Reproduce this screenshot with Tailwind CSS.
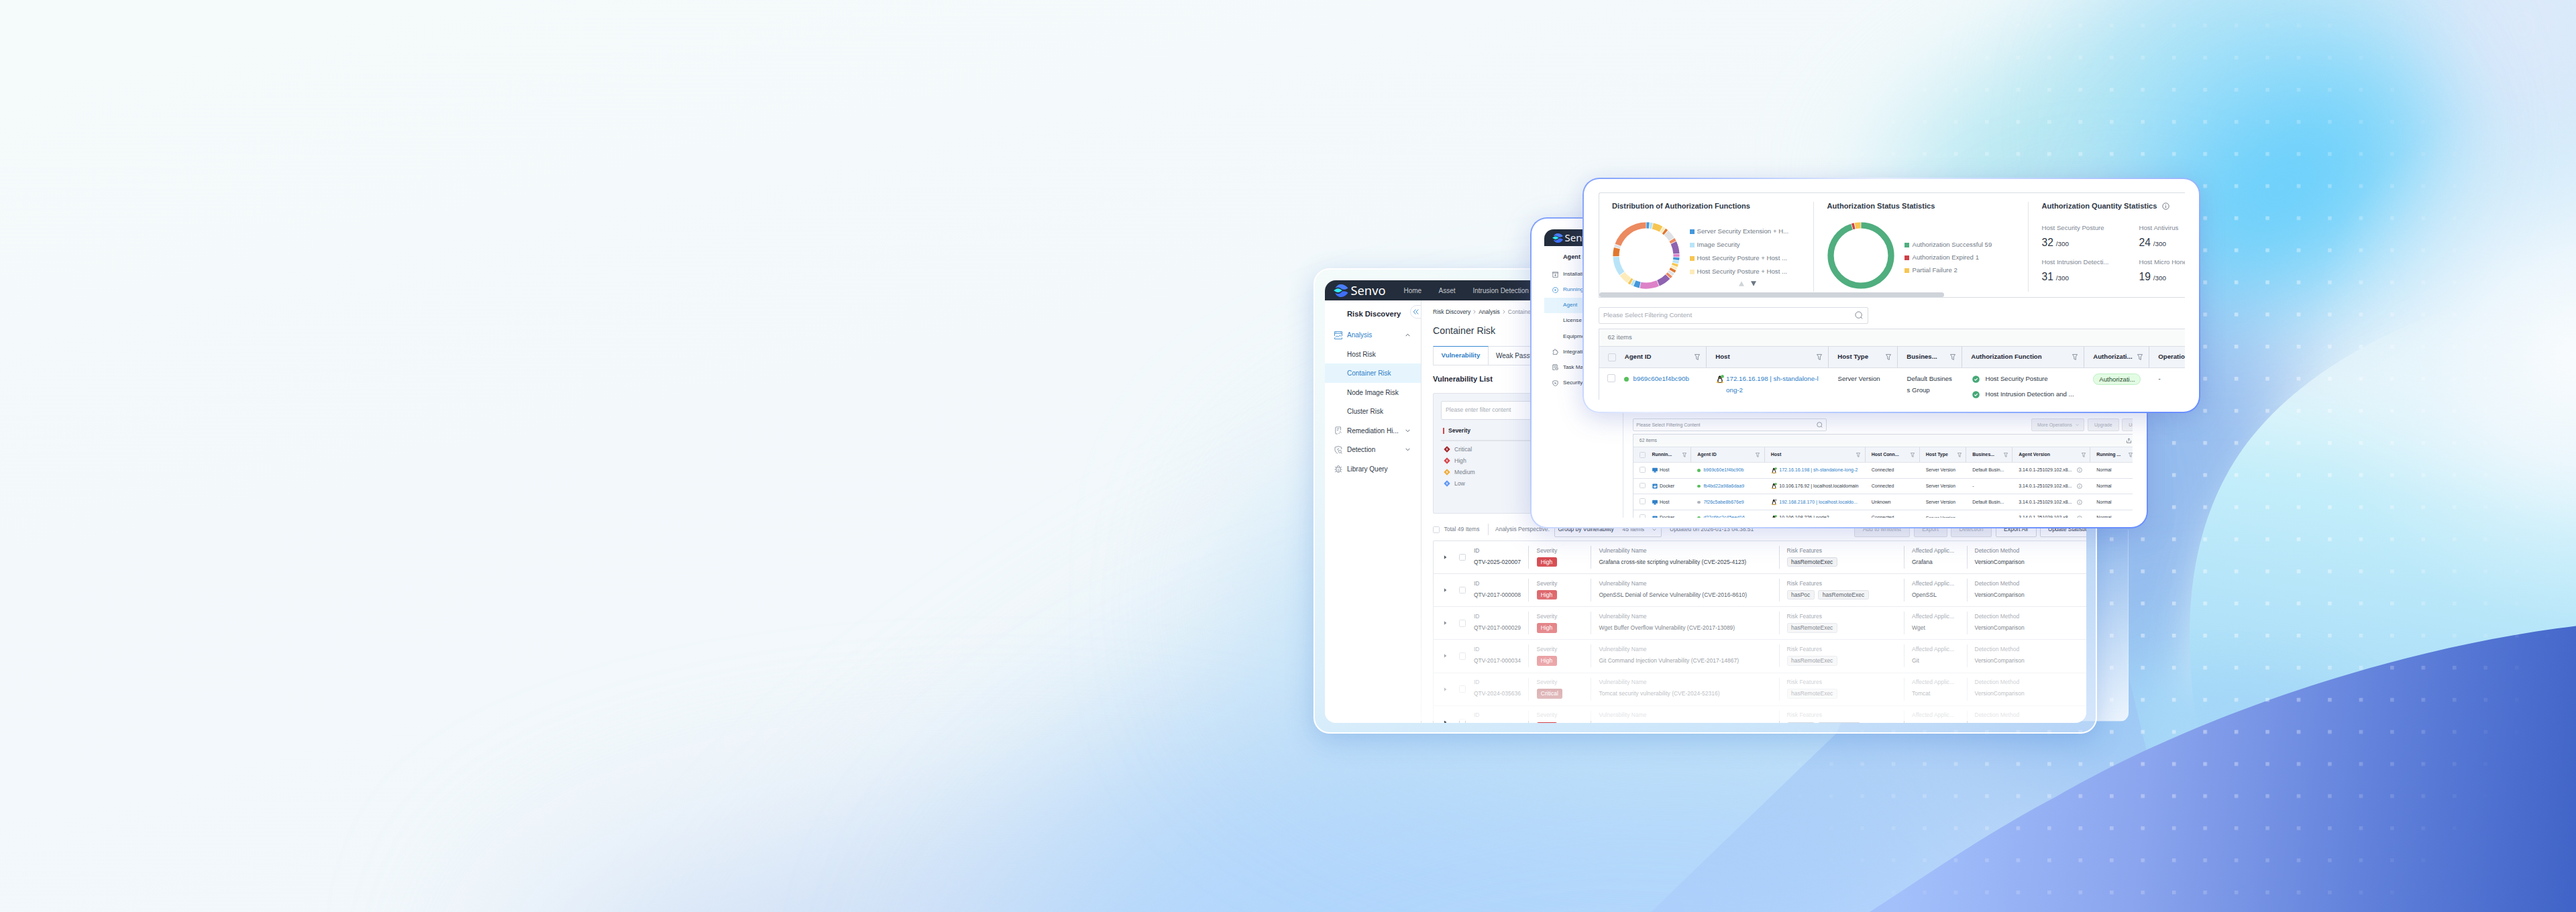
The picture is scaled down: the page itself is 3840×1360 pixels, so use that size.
<!DOCTYPE html>
<html lang="en">
<head>
    <meta charset="UTF-8">
    <meta name="viewport" content="width=device-width, initial-scale=1.0">
    <title>Senvo</title>
    <!-- Tailwind CSS CDN -->
    <script src="https://cdn.jsdelivr.net/npm/@tailwindcss/browser@4"></script>
</head>
<body class="h-[1360px] overflow-hidden bg-[#f5fbfb] font-['Liberation_Sans',Arial,sans-serif] text-[#2f3947]">
    <div class="relative w-[3840px] h-[1360px] overflow-hidden whitespace-nowrap">

        <!-- Background -->
        <svg class="absolute inset-0" width="3840" height="1360" viewBox="0 0 3840 1360" color-interpolation-filters="sRGB">
            <defs>
                <filter id="b40" x="-50%" y="-50%" width="200%" height="200%"><feGaussianBlur stdDeviation="36"/></filter>
                <filter id="b80" x="-80%" y="-80%" width="260%" height="260%"><feGaussianBlur stdDeviation="85"/></filter>
                <filter id="b130" x="-80%" y="-80%" width="260%" height="260%"><feGaussianBlur stdDeviation="140"/></filter>
                <linearGradient id="base" gradientUnits="userSpaceOnUse" x1="600" y1="0" x2="900" y2="1360">
                    <stop offset="0" stop-color="#f5fbfb"/>
                    <stop offset="1" stop-color="#f1f7fb"/>
                </linearGradient>
                <linearGradient id="wave" gradientUnits="userSpaceOnUse" x1="2850" y1="1150" x2="3840" y2="1270">
                    <stop offset="0" stop-color="#a3c0fb"/>
                    <stop offset=".35" stop-color="#8ba5ee"/>
                    <stop offset=".7" stop-color="#6080da"/>
                    <stop offset="1" stop-color="#4164c8"/>
                </linearGradient>
                <linearGradient id="wedge" gradientUnits="userSpaceOnUse" x1="0" y1="850" x2="0" y2="1360">
                    <stop offset="0" stop-color="#93bcee"/>
                    <stop offset="1" stop-color="#a9cbfb"/>
                </linearGradient>
                <linearGradient id="ice" gradientUnits="userSpaceOnUse" x1="3560" y1="400" x2="3440" y2="1060">
                    <stop offset="0" stop-color="#f7fbfd"/>
                    <stop offset=".25" stop-color="#e9f7fb"/>
                    <stop offset=".5" stop-color="#c4eefa"/>
                    <stop offset="1" stop-color="#a8dcf8"/>
                </linearGradient>
                <radialGradient id="iceRight" gradientUnits="userSpaceOnUse" cx="3840" cy="530" r="400">
                    <stop offset="0" stop-color="#fafcfe" stop-opacity=".95"/>
                    <stop offset=".4" stop-color="#f1f8fd" stop-opacity=".7"/>
                    <stop offset="1" stop-color="#d8effb" stop-opacity="0"/>
                </radialGradient>
                <linearGradient id="iceFade" gradientUnits="userSpaceOnUse" x1="3640" y1="440" x2="3540" y2="680">
                    <stop offset="0" stop-color="#fff" stop-opacity="0"/>
                    <stop offset="1" stop-color="#fff"/>
                </linearGradient>
                <pattern id="dots" patternUnits="userSpaceOnUse" x="3330.8" y="131" width="46.46" height="47.88">
                    <rect width="5.6" height="5.6" fill="#fff" fill-opacity=".42"/>
                </pattern>
                <radialGradient id="dotFade" gradientUnits="userSpaceOnUse" cx="0" cy="0" r="1" gradientTransform="translate(3180 700) scale(660 860)">
                    <stop offset=".45" stop-color="#fff"/>
                    <stop offset="1" stop-color="#fff" stop-opacity="0"/>
                </radialGradient>
                <mask id="dotMask" maskUnits="userSpaceOnUse" x="0" y="0" width="3840" height="1360"><rect width="3840" height="1360" fill="url(#dotFade)"/></mask>
                <mask id="iceMask" maskUnits="userSpaceOnUse" x="3000" y="0" width="840" height="1360"><rect x="3000" width="840" height="1360" fill="url(#iceFade)"/></mask>
            </defs>
            <rect width="3840" height="1360" fill="url(#base)"/>
            <!-- lower haze -->
            <ellipse cx="2280" cy="1150" rx="1200" ry="360" transform="rotate(-24 2280 1150)" fill="#cbe5f8" filter="url(#b130)"/>
            <ellipse cx="1480" cy="1480" rx="700" ry="230" fill="#cfdff6" filter="url(#b130)"/>
            <ellipse cx="2230" cy="1410" rx="760" ry="380" transform="rotate(-12 2230 1410)" fill="#b1d6fc" filter="url(#b130)"/>
            <ellipse cx="2500" cy="900" rx="600" ry="260" fill="#bfe1f7" filter="url(#b130)"/>
            <!-- upper right sky -->
            <ellipse cx="3520" cy="170" rx="440" ry="340" fill="#cae8fa" filter="url(#b80)"/>
            <ellipse cx="3760" cy="40" rx="170" ry="200" fill="#dce9fa" filter="url(#b80)"/>
            <ellipse cx="3140" cy="200" rx="340" ry="150" transform="rotate(-18 3140 200)" fill="#b6e8f2" filter="url(#b80)"/>
            <ellipse cx="3390" cy="190" rx="230" ry="200" fill="#a2dff9" filter="url(#b80)"/>
            <ellipse cx="3160" cy="760" rx="290" ry="420" fill="#95bcee" filter="url(#b80)"/>
            <ellipse cx="3400" cy="280" rx="220" ry="130" transform="rotate(-35 3400 280)" fill="#68cffb" filter="url(#b80)"/>
            <ellipse cx="3330" cy="1080" rx="300" ry="120" fill="#a2d6f8" filter="url(#b80)"/>
            <!-- pale dome -->
            <path d="M3960 400C3700 450 3500 540 3400 660S3272 830 3268 1000L3250 1180L3960 1100Z" fill="#dff4fb" filter="url(#b40)" opacity=".85"/>
            <g mask="url(#iceMask)">
                <path d="M3900 400C3640 440 3450 530 3350 660C3290 740 3262 840 3264 960C3266 1020 3270 1060 3280 1100L3900 1000Z" fill="url(#ice)"/>
            </g>
            <rect x="3440" y="130" width="400" height="860" fill="url(#iceRight)"/>
            <ellipse cx="3330" cy="1080" rx="160" ry="70" fill="#a4d6f7" filter="url(#b40)"/>
            <!-- wedge and wave -->
            <path d="M2738 1093L2830 870L3140 870L3200 1120L2800 1360H2461Z" fill="url(#wedge)" opacity=".55"/>
            <path d="M3860 931C3560 965 3260 1075 3065 1188C2960 1243 2880 1300 2787 1360H3860Z" fill="url(#wave)"/>
            <rect x="2400" width="1440" height="1360" fill="url(#dots)" mask="url(#dotMask)"/>
        </svg>

        <!-- Back sheet, visible at the right of the first window -->
        <div class="absolute left-[2990px] top-[790px] w-[183px] h-[286px] rounded-br-[13px] border-b border-r border-white/30 bg-linear-to-b from-white/0 to-white/80"></div>

        <!-- Window 1: container risk -->
        <div class="absolute left-[1958px] top-[400px] w-[1168px] h-[694px] rounded-[24px] border-2 border-white bg-linear-to-br from-[#f4fbfa]/90 via-[#e2f3fc]/70 to-[#c4dcf9]/60 p-[14.5px] pt-4 shadow-[0_10px_40px_rgba(70,130,210,0.32)]">
            <div class="relative flex h-[660px] w-[1135.5px] flex-col overflow-hidden rounded-2xl bg-white">
                <div class="flex h-[30px] shrink-0 items-center bg-[#232d3b] pl-[13.5px] text-[10px] text-[#c6cad0]">
                    <svg class="h-[19px] w-[21.5px]" viewBox="0 0 66 58">
                        <path d="M8 17C14 6 22 0 33 0C46 0 57 6 66 17C60 22 54 24 46 24C35 24 31 14 21 14C16 14 12 15 8 17Z" fill="#4a7dfb"/>
                        <path d="M6 38C10 41 15 43 21 43C32 43 36 31 46 31C54 31 60 33 66 39C57 51 47 58 34 58C21 58 12 51 6 38Z" fill="#3f6ff8"/>
                        <path d="M0 28C7 25 12 19 20 19S33 25 40 28C33 31 28 37 20 37S7 31 0 28Z" fill="#30e8f4"/>
                    </svg>
                    <span class="ml-[4px] w-[79px] font-['Noto_Sans'] text-[18.3px] leading-none text-white">Senvo</span>
                    <span class="w-[52px]">Home</span>
                    <span class="w-[51px]">Asset</span>
                    <span>Intrusion Detection</span>
                </div>
                <div class="flex min-h-0 flex-1">
                    <!-- Sidebar -->
                    <div class="relative w-[144.5px] shrink-0 border-r border-[#e3e6ec] text-[10px]">
                        <div class="flex h-[37.25px] items-center pl-[33.5px] pt-[4px] text-[11.2px] font-bold text-[#1f2836]">Risk Discovery</div>
                        <svg class="absolute right-0 top-[7px]" width="16" height="20" viewBox="0 0 16 20" fill="none">
                            <path d="M16 .5H10A9.5 9.5 0 0 0 10 19.5H16" stroke="#dfe3ea" fill="#fff"/>
                            <path d="M8.5 6.5L5.2 10L8.5 13.5M12.2 6.5L8.9 10L12.2 13.5" stroke="#3a8ad0"/>
                        </svg>
                        <div class="flex h-[28.5px] items-center pl-[14px] text-[#2f80c8]">
                            <svg class="mr-[7.5px]" width="12" height="12" viewBox="0 0 12 12" fill="none" stroke="#3a8ad0" stroke-width=".9"><path d="M.5 7V.6H11.5V7M.5 3.2H11.5M2 1.9H3M9 1.9H10M.5 9.5V11.5H11.5V9.5M1.5 9.2L4 6.8L6 8.6L8.2 6L10.5 7.5"/></svg>
                            <span class="w-[87px]">Analysis</span>
                            <svg width="7" height="5" viewBox="0 0 7 5" fill="none" stroke="#4b5563" stroke-width=".9"><path d="M.6 4.2L3.5 1.2L6.4 4.2"/></svg>
                        </div>
                        <div class="flex h-[28.5px] items-center pl-[33.5px]">Host Risk</div>
                        <div class="flex h-[28.5px] items-center bg-[#e6f5fd] pl-[33.5px] text-[#2f80c8]">Container Risk</div>
                        <div class="flex h-[28.5px] items-center pl-[33.5px]">Node Image Risk</div>
                        <div class="flex h-[28.5px] items-center pl-[33.5px]">Cluster Risk</div>
                        <div class="flex h-[28.5px] items-center pl-[14px]">
                            <svg class="mr-[7.5px]" width="12" height="12" viewBox="0 0 12 12" fill="none" stroke="#8a929e" stroke-width=".9"><path d="M5 11H2.8Q1.8 11 1.8 10V2Q1.8 .8 3 .8H9.5V5.5M3.8 3.3H7.6M3.8 5.5H6M6.3 11L8.6 8.7M8.2 7L10.5 9.2"/></svg>
                            <span class="w-[87px]">Remediation Hi...</span>
                            <svg width="7" height="5" viewBox="0 0 7 5" fill="none" stroke="#4b5563" stroke-width=".9"><path d="M.6 .8L3.5 3.8L6.4 .8"/></svg>
                        </div>
                        <div class="flex h-[28.5px] items-center pl-[14px]">
                            <svg class="mr-[7.5px]" width="12" height="12" viewBox="0 0 12 12" fill="none" stroke="#8a929e" stroke-width=".9"><path d="M10.8 5V2L6 .5L1 2V6.5Q1.5 9.5 5 11.3M6.5 3L4.8 6H6.2"/><circle cx="8.4" cy="8.3" r="2"/><path d="M9.9 9.8L11.4 11.4"/></svg>
                            <span class="w-[87px]">Detection</span>
                            <svg width="7" height="5" viewBox="0 0 7 5" fill="none" stroke="#4b5563" stroke-width=".9"><path d="M.6 .8L3.5 3.8L6.4 .8"/></svg>
                        </div>
                        <div class="flex h-[28.5px] items-center pl-[14px]">
                            <svg class="mr-[7.5px]" width="12" height="12" viewBox="0 0 12 12" fill="none" stroke="#8a929e" stroke-width=".9"><path d="M3 4H9V8A3 3.4 0 0 1 3 8ZM4 4A2 2.6 0 0 1 8 4M6 6V11M.5 7H3M9 7H11.5M1 3L3 4.8M11 3L9 4.8M1 11L3.3 9.2M11 11L8.7 9.2"/></svg>
                            <span>Library Query</span>
                        </div>
                    </div>
                    <!-- Main -->
                    <div class="flex min-w-0 flex-1 flex-col pl-[17px] text-[8.5px]">
                        <div class="flex h-[34px] shrink-0 items-center gap-[4px]">
                            <span>Risk Discovery</span>
                            <svg width="4" height="6" viewBox="0 0 4 6" fill="none" stroke="#8a929e" stroke-width=".8"><path d="M.6 .5L3.2 3L.6 5.5"/></svg>
                            <span>Analysis</span>
                            <svg width="4" height="6" viewBox="0 0 4 6" fill="none" stroke="#8a929e" stroke-width=".8"><path d="M.6 .5L3.2 3L.6 5.5"/></svg>
                            <span class="text-[#8d949f]">Container Risk</span>
                        </div>
                        <div class="flex h-[23px] shrink-0 items-center text-[14.2px]">Container Risk</div>
                        <div class="mt-[11px] flex h-[28.5px] shrink-0 text-[10px]">
                            <div class="flex w-[83px] items-center justify-center border border-t-[1.5px] border-[#dde1e8] border-t-[#3a8ad0] text-[9.7px] font-bold text-[#2f80c8]">Vulnerability</div>
                            <div class="flex w-[110px] items-center border-y border-r border-[#dde1e8] pl-[11px]">Weak Password</div>
                        </div>
                        <div class="flex h-[41px] shrink-0 items-center text-[11.1px] font-bold text-[#1f2836]">Vulnerability List</div>
                        <div class="h-[180.5px] w-[960px] shrink-0 rounded-[2px] border border-[#dfe3ea] bg-[#f1f4f9] px-[11px] pt-[11px]">
                            <div class="flex h-[28px] w-[400px] items-center rounded-[2px] border border-[#d9dde4] bg-white pl-[6px] text-[8.6px] text-[#a6acb5]">Please enter filter content</div>
                            <div class="flex h-[32.5px] w-[400px] items-center border-b-2 border-[#e0e3e9] pl-[3px] pt-[4px] font-bold text-[#1f2836]"><span class="mr-[6px] h-[9px] w-[2px] bg-[#d5444a]"></span>Severity</div>
                            <div id="levels" class="pt-[3.5px] text-[8.6px] text-[#767e8a]"></div>
                        </div>
                        <div class="mt-[12px] flex h-[23px] shrink-0 items-center text-[#767e8a]">
                            <span class="mr-[6.5px] h-[10px] w-[10px] shrink-0 rounded-[1.5px] border border-[#d3d7de]"></span>
                            <span class="w-[65.5px] shrink-0">Total 49 Items</span>
                            <span class="h-[17px] w-[11px] shrink-0 border-l border-[#d9dde4]"></span>
                            <span class="w-[87.5px] shrink-0">Analysis Perspective:</span>
                            <div class="flex h-[23px] w-[160.5px] shrink-0 items-center rounded-[2px] border border-[#d3d7de] pl-[5px]">
                                <span class="w-[96px] shrink-0 text-[#2f3947]">Group by Vulnerability</span>
                                <span class="w-[44px] shrink-0">45 Items</span>
                                <svg width="6" height="4" viewBox="0 0 7 5" fill="none" stroke="#8a929e"><path d="M.6 .8L3.5 3.8L6.4 .8"/></svg>
                            </div>
                            <span class="ml-[12px] w-[274.5px] shrink-0">Updated on 2026-01-13 04:38:51</span>
                            <div class="flex h-full shrink-0 gap-[5.5px]">
                                <div class="flex w-[83.5px] items-center justify-center rounded-[2px] border border-[#dadde3] bg-[#f1f2f5] text-[#a9aeb7]">Add to whitelist</div>
                                <div class="flex w-[50px] items-center justify-center rounded-[2px] border border-[#dadde3] bg-[#f1f2f5] text-[#a9aeb7]">Export</div>
                                <div class="flex w-[61px] items-center justify-center rounded-[2px] border border-[#dadde3] bg-[#f1f2f5] text-[#a9aeb7]">Detection</div>
                                <div class="flex w-[61px] items-center justify-center rounded-[2px] border border-[#d3d7de] text-[#2f3947]">Export All</div>
                                <div class="flex w-[90px] items-center rounded-[2px] border border-[#d3d7de] pl-[11px] text-[#2f3947]">Update Statistics</div>
                            </div>
                        </div>
                        <div id="vulns" class="mt-[5px] rounded-tl-[2px] border-l border-t border-[#dfe3ea]"></div>
                    </div>
                </div>
                <div class="absolute inset-x-0 top-[402px] h-[255px] bg-linear-to-b from-white/0 to-white/80"></div>
            </div>
        </div>

        <!-- Window 2: agent management -->
        <div class="absolute left-[2281px] top-[324px] h-[464px] w-[921px] rounded-[25px] bg-linear-135 from-[#7f9ffb] via-[#dde6ff] via-45% to-[#6a8fff] to-90% p-[1.8px] shadow-[0_8px_40px_rgba(84,104,200,0.25)]">
            <div class="h-full rounded-[23px] bg-white pl-[19.2px] pt-[16.2px]">
                <div class="flex h-[430px] w-[877px] flex-col overflow-hidden rounded-tl-[14px]">
                    <div class="flex h-[25.5px] shrink-0 items-center bg-[#232d3b] pl-[12px]">
                        <svg class="h-[14px] w-[16px]" viewBox="0 0 66 58">
                            <path d="M8 17C14 6 22 0 33 0C46 0 57 6 66 17C60 22 54 24 46 24C35 24 31 14 21 14C16 14 12 15 8 17Z" fill="#4a7dfb"/>
                            <path d="M6 38C10 41 15 43 21 43C32 43 36 31 46 31C54 31 60 33 66 39C57 51 47 58 34 58C21 58 12 51 6 38Z" fill="#3f6ff8"/>
                            <path d="M0 28C7 25 12 19 20 19S33 25 40 28C33 31 28 37 20 37S7 31 0 28Z" fill="#30e8f4"/>
                        </svg>
                        <span class="ml-[2.5px] font-['Noto_Sans'] text-[15px] leading-none text-white">Senvo</span>
                    </div>
                    <div class="flex min-h-0 flex-1">
                        <div class="w-[118px] shrink-0 border-r border-[#e3e6ec] text-[8.1px]">
                            <div class="flex h-[30px] items-center pl-[28px] pt-[3px] text-[9.2px] font-bold text-[#1f2836]">Agent Management</div>
                            <div class="flex h-[23.15px] items-center pl-[12.5px]">
                                <svg class="mr-[6.5px]" width="9" height="9" viewBox="0 0 9 9" fill="none" stroke="#6f7885" stroke-width=".8"><path d="M.8 1.8V8.4H8.2V1.8M.4 .8H8.6V2H.4ZM4.5 3.4V6.4M3.2 5.2L4.5 6.5L5.8 5.2"/></svg>
                                <span>Installation</span>
                            </div>
                            <div class="flex h-[23.15px] items-center pl-[12.5px] text-[#2f80c8]">
                                <svg class="mr-[6.5px]" width="9" height="9" viewBox="0 0 9 9" fill="none" stroke="#3a8ad0" stroke-width=".8"><path d="M3 8.3L2.2 7.8M6 8.3A4 4 0 0 0 8.5 4.5A4 4 0 0 0 6 .8M3 .8A4 4 0 0 0 .5 4.5A4 4 0 0 0 2 7.5M3 .8H6M3.6 8.4H6"/><path d="M3.6 3L6.1 4.5L3.6 6Z" fill="#3a8ad0" stroke="none"/></svg>
                                <span>Running</span>
                            </div>
                            <div class="flex h-[23.15px] items-center bg-[#e6f5fd] pl-[28px] text-[#2f80c8]">Agent</div>
                            <div class="flex h-[23.15px] items-center pl-[28px]">License</div>
                            <div class="flex h-[23.15px] items-center pl-[28px]">Equipment</div>
                            <div class="flex h-[23.15px] items-center pl-[12.5px]">
                                <svg class="mr-[6.5px]" width="9" height="9" viewBox="0 0 9 9" fill="none" stroke="#6f7885" stroke-width=".8"><path d="M1.2 2.6H3A1.2 1.2 0 1 1 5.2 2.6H7V4.2A1.1 1.1 0 1 1 7 6.3V8.4H1.2V6.5A1.1 1.1 0 0 0 1.2 4.4Z"/></svg>
                                <span>Integration</span>
                            </div>
                            <div class="flex h-[23.15px] items-center pl-[12.5px]">
                                <svg class="mr-[6.5px]" width="9" height="9" viewBox="0 0 9 9" fill="none" stroke="#6f7885" stroke-width=".8"><path d="M4 8.5H.8V1H7.2V4M2.6 .4V1.6M5.4 .4V1.6M2.3 3.2H5.7M2.3 5.2H4"/><circle cx="6.5" cy="6.6" r="2"/><path d="M5.6 6.6H7.4"/></svg>
                                <span>Task Management</span>
                            </div>
                            <div class="flex h-[23.15px] items-center pl-[12.5px]">
                                <svg class="mr-[6.5px]" width="9" height="9" viewBox="0 0 9 9" fill="none" stroke="#6f7885" stroke-width=".8"><path d="M4.5 .5L8.2 1.5V5Q8 7.2 4.5 8.6Q1 7.2 .8 5V1.5ZM4.5 2.6L3.4 4.6H5.6L4.5 6"/></svg>
                                <span>Security</span>
                            </div>
                        </div>
                        <div class="flex min-w-0 flex-1 flex-col pl-[14.3px] pt-[257px] text-[6.95px]">
                            <div class="flex h-[18.7px] shrink-0">
                                <div class="flex w-[288.5px] shrink-0 items-center justify-between rounded-[2px] border border-[#d9dde4] pl-[4px] pr-[5px] text-[#8f96a0]">
                                    <span>Please Select Filtering Content</span>
                                    <svg width="9" height="9" viewBox="0 0 9 9" fill="none" stroke="#6f7885" stroke-width=".7"><circle cx="4.2" cy="4.2" r="3.5"/><path d="M6.8 6.8L8.4 8.4"/></svg>
                                </div>
                                <div class="ml-[305.5px] flex shrink-0 gap-[4.5px] text-[#a9aeb7]">
                                    <div class="flex w-[79px] items-center justify-center gap-[5px] rounded-[2px] border border-[#e1e3e8] bg-[#f3f4f6]">More Operations<svg width="5" height="3.5" viewBox="0 0 7 5" fill="none" stroke="#b4b9c1"><path d="M.6 .8L3.5 3.8L6.4 .8"/></svg></div>
                                    <div class="flex w-[47px] items-center justify-center rounded-[2px] border border-[#e1e3e8] bg-[#f3f4f6]">Upgrade</div>
                                    <div class="flex w-[50px] items-center rounded-[2px] border border-[#e1e3e8] bg-[#f3f4f6] pl-[9px]">Uninstall</div>
                                </div>
                            </div>
                            <div class="mt-[4.3px] border-l border-t border-[#d9dde4]">
                                <div class="flex h-[18px] items-center justify-between bg-[#f9fbfb] pl-[8.5px] pr-[2px] text-[#767e8a]">
                                    <span>62 items</span>
                                    <svg width="7" height="8" viewBox="0 0 7 8" fill="none" stroke="#6f7885" stroke-width=".8"><path d="M.5 4V7.3H6.5V4M3.5 5.3V.9M1.7 2.6L3.5 .8L5.3 2.6"/></svg>
                                </div>
                                <div id="agentHead" class="flex h-[23.5px] items-center border-y border-[#dfe3ea] bg-[#f1f4f9] font-bold text-[#1f2836]"></div>
                                <div id="agents"></div>
                            </div>
                        </div>
                    </div>
                </div>
            </div>
        </div>

        <!-- Window 3: authorization -->
        <div class="absolute left-[2359px] top-[265px] h-[351px] w-[920.5px] rounded-[25px] bg-linear-135 from-[#7f9ffb] via-[#e6edff] via-35% to-[#6a8fff] to-95% p-[1.8px] shadow-[0_8px_36px_rgba(74,94,190,0.25)]">
            <div class="h-full rounded-[23px] bg-white pl-[22.2px] pt-[20.2px]">
                <div class="w-[874px] overflow-hidden text-[9.65px]">
                    <!-- Statistics -->
                    <div class="h-[157.5px] overflow-hidden rounded-tl-[3px] border-b border-l border-t border-[#d9dde2]">
                        <div class="flex h-[148.5px] pt-[13px]">
                            <div class="h-[134px] w-[320px] shrink-0 border-r border-[#e1e4e9] pl-[19px]">
                                <div class="flex h-[13px] items-center text-[11.1px] font-bold">Distribution of Authorization Functions</div>
                                <div class="mt-[16px] flex text-[#727b87]">
                                    <svg id="donut1" width="102" height="102" viewBox="-51 -51 102 102"></svg>
                                    <div class="ml-[14px] mt-[5px]">
                                        <div class="flex h-[20.1px] items-center gap-[3.5px]"><span class="h-[7px] w-[7px] bg-[#4498db]"></span>Server Security Extension + H...</div>
                                        <div class="flex h-[20.1px] items-center gap-[3.5px]"><span class="h-[7px] w-[7px] bg-[#b9e4f8]"></span>Image Security</div>
                                        <div class="flex h-[20.1px] items-center gap-[3.5px]"><span class="h-[7px] w-[7px] bg-[#f7c652]"></span>Host Security Posture + Host ...</div>
                                        <div class="flex h-[20.1px] items-center gap-[3.5px]"><span class="h-[7px] w-[7px] bg-[#fdebb9]"></span>Host Security Posture + Host ...</div>
                                        <svg class="ml-[73px] mt-[4px]" width="26" height="8" viewBox="0 0 26 8"><path d="M4 .2L8 7.8H0Z" fill="#cfd4d9"/><path d="M18 .2H26L22 7.8Z" fill="#6d7783"/></svg>
                                    </div>
                                </div>
                            </div>
                            <div class="h-[134px] w-[320px] shrink-0 border-r border-[#e1e4e9] pl-[19.5px]">
                                <div class="flex h-[13px] items-center text-[11.1px] font-bold">Authorization Status Statistics</div>
                                <div class="mt-[16px] flex text-[#727b87]">
                                    <svg id="donut2" width="102" height="102" viewBox="-51 -51 102 102"></svg>
                                    <div class="ml-[14px] mt-[25.5px]">
                                        <div class="flex h-[19.3px] items-center gap-[4px]"><span class="h-[7px] w-[7px] bg-[#50ae7f]"></span>Authorization Successful 59</div>
                                        <div class="flex h-[19.3px] items-center gap-[4px]"><span class="h-[7px] w-[7px] bg-[#cf4047]"></span>Authorization Expired 1</div>
                                        <div class="flex h-[19.3px] items-center gap-[4px]"><span class="h-[7px] w-[7px] bg-[#f7c652]"></span>Partial Failure 2</div>
                                    </div>
                                </div>
                            </div>
                            <div class="shrink-0 pl-[19.5px]">
                                <div class="flex h-[13px] items-center gap-[7.5px] text-[11.1px] font-bold">Authorization Quantity Statistics
                                    <svg width="11" height="11" viewBox="0 0 11 11" fill="none" stroke="#4b5563" stroke-width=".8"><circle cx="5.5" cy="5.5" r="4.7"/><path d="M5.5 4.8V8M5.5 3V3.9"/></svg>
                                </div>
                                <div class="mt-[20px] grid grid-cols-[145px_145px] gap-y-[11.5px] text-[#808894]">
                                    <div><div class="flex h-[12px] items-center">Host Security Posture</div><div class="mt-[4px] flex h-[24px] items-baseline gap-[4px] text-[9.9px] leading-6 text-[#2f3947]"><span class="text-[15.6px]">32</span>/300</div></div>
                                    <div><div class="flex h-[12px] items-center">Host Antivirus</div><div class="mt-[4px] flex h-[24px] items-baseline gap-[4px] text-[9.9px] leading-6 text-[#2f3947]"><span class="text-[15.6px]">24</span>/300</div></div>
                                    <div><div class="flex h-[12px] items-center">Host Intrusion Detecti...</div><div class="mt-[4px] flex h-[24px] items-baseline gap-[4px] text-[9.9px] leading-6 text-[#2f3947]"><span class="text-[15.6px]">31</span>/300</div></div>
                                    <div><div class="flex h-[12px] items-center">Host Micro Honeypot</div><div class="mt-[4px] flex h-[24px] items-baseline gap-[4px] text-[9.9px] leading-6 text-[#2f3947]"><span class="text-[15.6px]">19</span>/300</div></div>
                                </div>
                            </div>
                        </div>
                        <div class="h-[7px] w-[514px] rounded-full bg-[#cfd3da]"></div>
                    </div>
                    <div class="mt-[13.5px] flex h-[25px] w-[402px] items-center justify-between rounded-[2px] border border-[#d9dde2] pl-[6px] pr-[7px] text-[#a3a9b2]">
                        <span>Please Select Filtering Content</span>
                        <svg width="12" height="12" viewBox="0 0 12 12" fill="none" stroke="#6f7885" stroke-width=".9"><circle cx="5.6" cy="5.6" r="4.7"/><path d="M9 9L11.2 11.2"/></svg>
                    </div>
                    <div class="mt-[7px] border-l border-t border-[#d9dde4]">
                        <div class="flex h-[25px] items-center bg-[#f9fbfb] pl-[12.5px] text-[#767e8a]">62 items</div>
                        <div id="authHead" class="flex h-[33.5px] items-center border-y border-[#dadee5] bg-[#f1f4f9] font-bold text-[#1f2836]"></div>
                        <div class="flex h-[47px] pt-[8px] leading-[16.3px]">
                            <div class="flex w-[160.5px] shrink-0 pl-[12.5px]">
                                <span class="mr-[13px] mt-[1px] h-[12px] w-[12px] rounded-[2px] border border-[#d3d7de]"></span>
                                <span class="mr-[6.5px] mt-[5px] h-[6.5px] w-[6.5px] rounded-full bg-[#58bf5c]"></span>
                                <span class="text-[9.8px] text-[#2f80c8]">b969c60e1f4bc90b</span>
                            </div>
                            <div class="flex w-[182px] shrink-0 pl-[13.5px] text-[#2f80c8]">
                                <svg class="mr-[3px] mt-[1.5px]" width="12" height="13" viewBox="0 0 12 13"><path d="M3.6 3A2.3 2.6 0 0 1 8 3C8 5.5 10 7 10 10Q9.5 12 6 12T2 10C2 7 3.6 6 3.6 3Z" fill="#2b2b2b"/><path d="M4.5 5.5Q6 7 7.3 5.5Q8.6 8 8.4 10.3Q6 12 3.6 10.3Q3.5 8 4.5 5.5Z" fill="#fff"/><path d="M4.8 4.4L6 3.8L7.2 4.4L6 5.3ZM.6 11.5L2 9.3L4.4 11.6L3.6 12.6ZM11 11.5L9.6 9.3L7.6 11.6L8.4 12.6Z" fill="#f3b02c"/><circle cx="9.6" cy="2.4" r="2.3" fill="#58bf5c"/></svg>
                                <span class="text-[9.8px]">172.16.16.198 | sh-standalone-l<br>ong-2</span>
                            </div>
                            <div class="w-[103px] shrink-0 pl-[13px]">Server Version</div>
                            <div class="w-[96px] shrink-0 pl-[13px]">Default Busines<br>s Group</div>
                            <div class="w-[182px] shrink-0 pl-[15px]">
                                <div class="flex h-[16.3px] items-center"><svg class="mr-[8px]" width="11" height="11" viewBox="0 0 11 11"><circle cx="5.5" cy="5.5" r="5.3" fill="#45a877"/><path d="M3.2 5.6L4.9 7.2L7.8 4.2" fill="none" stroke="#fff" stroke-width="1.2"/></svg>Host Security Posture</div>
                                <div class="mt-[6.3px] flex h-[16.3px] items-center"><svg class="mr-[8px]" width="11" height="11" viewBox="0 0 11 11"><circle cx="5.5" cy="5.5" r="5.3" fill="#45a877"/><path d="M3.2 5.6L4.9 7.2L7.8 4.2" fill="none" stroke="#fff" stroke-width="1.2"/></svg>Host Intrusion Detection and ...</div>
                            </div>
                            <div class="w-[97px] shrink-0 pl-[13px]"><span class="flex h-[16.5px] w-[71px] items-center justify-center rounded-full border border-[#bfefc4] bg-[#e2fce3] text-[#2c4a31]">Authorizati...</span></div>
                            <div class="pl-[13px]">-</div>
                        </div>
                    </div>
                </div>
            </div>
        </div>
    </div>

    <script>
        // Severity levels in the filter panel
        const levels = [['Critical', '#a3262b'], ['High', '#d5444a'], ['Medium', '#f0ac3c'], ['Low', '#5f97f6']];
        document.getElementById('levels').innerHTML = levels.map(([name, color]) => `
            <div class="flex h-[17.1px] items-center pl-[4px]">
                <svg class="mr-[6px]" width="10" height="10" viewBox="0 0 10 10"><rect x="1.6" y="1.6" width="6.8" height="6.8" rx=".8" transform="rotate(45 5 5)" fill="${color}"/><path d="M5.6 2.6L3.4 5.3H4.9L4.4 7.4L6.6 4.7H5.1Z" fill="#fff"/></svg>
                ${name}
            </div>`).join('');

        // Vulnerability rows
        const vulns = [
            ['QTV-2025-020007', 'High', 'Grafana cross-site scripting vulnerability (CVE-2025-4123)', ['hasRemoteExec'], 'Grafana'],
            ['QTV-2017-000008', 'High', 'OpenSSL Denial of Service Vulnerability (CVE-2016-8610)', ['hasPoc', 'hasRemoteExec'], 'OpenSSL'],
            ['QTV-2017-000029', 'High', 'Wget Buffer Overflow Vulnerability (CVE-2017-13089)', ['hasRemoteExec'], 'Wget'],
            ['QTV-2017-000034', 'High', 'Git Command Injection Vulnerability (CVE-2017-14867)', ['hasRemoteExec'], 'Git'],
            ['QTV-2024-035636', 'Critical', 'Tomcat security vulnerability (CVE-2024-52316)', ['hasRemoteExec'], 'Tomcat'],
            ['', 'High', '', ['hasPoc', 'hasRemoteE'], '']
        ];
        const label = text => `<div class="flex h-[14px] items-center text-[#808894]">${text}</div>`;
        document.getElementById('vulns').innerHTML = vulns.map(([id, severity, name, features, app]) => `
            <div class="flex h-[49.15px] items-center border-b border-[#e3e6ec]">
                <div class="flex w-[60px] shrink-0 items-center pl-[15px]">
                    <svg width="5" height="6" viewBox="0 0 5 6"><path d="M.8 .2L4.4 3L.8 5.8Z" fill="#4b5563"/></svg>
                    <span class="ml-[17.5px] h-[10.5px] w-[10.5px] rounded-[1.5px] border border-[#d3d7de]"></span>
                </div>
                <div class="h-[34px] w-[81px] shrink-0">${label('ID')}<div class="flex h-[20px] items-center">${id}</div></div>
                <div class="h-[34px] w-[93px] shrink-0 border-l border-[#d9dde4] pl-[11.5px]">${label('Severity')}
                    <div class="flex h-[20px] items-center"><span class="flex h-[14.5px] items-center rounded-[2.5px] px-[6.3px] text-white ${severity === 'High' ? 'bg-[#d5444a]' : 'bg-[#9c2228]'}">${severity}</span></div></div>
                <div class="h-[34px] w-[280.5px] shrink-0 border-l border-[#d9dde4] pl-[11.5px]">${label('Vulnerability Name')}<div class="flex h-[20px] items-center">${name}</div></div>
                <div class="h-[34px] w-[186.5px] shrink-0 border-l border-[#d9dde4] pl-[11px]">${label('Risk Features')}
                    <div class="flex h-[20px] items-center gap-[5.5px]">${features.map(f => `<span class="flex h-[14.5px] items-center rounded-[2.5px] border border-[#d9dde4] bg-[#f0f1f3] px-[5.5px]">${f}</span>`).join('')}</div></div>
                <div class="h-[34px] w-[93.5px] shrink-0 border-l border-[#d9dde4] pl-[11px]">${label('Affected Applic...')}<div class="flex h-[20px] items-center">${app}</div></div>
                <div class="h-[34px] shrink-0 border-l border-[#d9dde4] pl-[11px]">${label('Detection Method')}<div class="flex h-[20px] items-center">${id ? 'VersionComparison' : ''}</div></div>
            </div>`).join('');

        // Table headers with filter icons
        const funnel = size => `<svg width="${size}" height="${size * 1.15}" viewBox="0 0 8 9.2" fill="none" stroke="#6f7885" stroke-width=".8"><path d="M.5 .6H7.5L5.3 4V8.5L2.8 7.2V4Z"/></svg>`;
        const agentCols = [['Runnin...', 86], ['Agent ID', 109.5], ['Host', 150], ['Host Conn...', 81], ['Host Type', 69.5], ['Busines...', 69], ['Agent Version', 116], ['Running ...', 70]];
        document.getElementById('agentHead').innerHTML = agentCols.map(([name, width], i) => `
            <div class="flex h-full shrink-0 items-center border-r border-[#d9dde4] pl-[9px] pr-[6.3px]" style="width:${width}px">
                ${i ? '' : '<span class="mr-[9.5px] h-[8.8px] w-[8.8px] rounded-[1.5px] border border-[#d3d7de]"></span>'}
                <span class="flex-1">${name}</span>${funnel(6)}
            </div>`).join('');
        const authCols = [['Agent ID', 160.5], ['Host', 182], ['Host Type', 103], ['Busines...', 96], ['Authorization Function', 182], ['Authorizati...', 97], ['Operation', 80]];
        document.getElementById('authHead').innerHTML = authCols.map(([name, width], i) => `
            <div class="flex h-full shrink-0 items-center border-r border-[#d3d7df] pl-[12.8px] pr-[9px]" style="width:${width}px">
                ${i ? '' : '<span class="mr-[13px] h-[12px] w-[12px] rounded-[2px] border border-[#d3d7de]"></span>'}
                <span class="flex-1">${name}</span>${funnel(8)}
            </div>`).join('');

        // Agent rows
        const agents = [
            ['Host', 'b969c60e1f4bc90b', 1, '172.16.16.198 | sh-standalone-long-2', 1, 'Connected', 'Default Busin...'],
            ['Docker', 'fb4bd22a98a6daa9', 1, '10.106.176.92 | localhost.localdomain', 0, 'Connected', '-'],
            ['Host', '7f26c5abe8b676e9', 0, '192.168.218.170 | localhost.localdo...', 1, 'Unknown', 'Default Busin...'],
            ['Docker', 'd22c6bc2c45eed16', 1, '10.106.108.226 | node2', 0, 'Connected', '']
        ];
        const runIcon = {
            Host: '<svg width="8" height="8" viewBox="0 0 8 8" fill="#2f80c8"><path d="M.6 .8H7.4Q7.9 .8 7.9 1.4V5.2Q7.9 5.8 7.4 5.8H5V6.7H6.2V7.5H1.8V6.7H3V5.8H.6Q.1 5.8 .1 5.2V1.4Q.1 .8 .6 .8Z"/></svg>',
            Docker: '<svg width="8" height="8" viewBox="0 0 8 8"><rect x=".4" y=".4" width="7.2" height="7.2" rx=".8" fill="#2f80c8"/><path d="M1.5 4.2H5.2V3L6.6 3.8Q6.2 6.3 3.8 6.3Q1.7 6.2 1.5 4.2ZM2.6 2.9H4.6V3.8H2.6ZM3.7 1.8H4.6V2.6H3.7Z" fill="#fff"/></svg>'
        };
        document.getElementById('agents').innerHTML = agents.map(([run, id, on, host, link, conn, group]) => `
            <div class="flex h-[23.75px] items-center border-b border-[#dfe3ea]">
                <div class="flex w-[86px] shrink-0 items-center pl-[9px]"><span class="mb-[2px] mr-[10px] h-[8.8px] w-[8.8px] rounded-[1.5px] border border-[#d3d7de]"></span>${runIcon[run]}<span class="ml-[3px]">${run}</span></div>
                <div class="flex w-[109.5px] shrink-0 items-center pl-[9px] text-[7.05px] text-[#2f80c8]"><span class="mr-[4.5px] h-[4.6px] w-[4.6px] rounded-full ${on ? 'bg-[#58bf5c]' : 'bg-[#aeb3bb]'}"></span>${id}</div>
                <div class="flex w-[150px] shrink-0 items-center pl-[9.5px] text-[7.05px] ${link ? 'text-[#2f80c8]' : ''}">
                    <svg class="mr-[3px]" width="9" height="9.5" viewBox="0 0 12 13"><path d="M3.6 3A2.3 2.6 0 0 1 8 3C8 5.5 10 7 10 10Q9.5 12 6 12T2 10C2 7 3.6 6 3.6 3Z" fill="#2b2b2b"/><path d="M4.5 5.5Q6 7 7.3 5.5Q8.6 8 8.4 10.3Q6 12 3.6 10.3Q3.5 8 4.5 5.5Z" fill="#fff"/><path d="M4.8 4.4L6 3.8L7.2 4.4L6 5.3ZM.6 11.5L2 9.3L4.4 11.6L3.6 12.6ZM11 11.5L9.6 9.3L7.6 11.6L8.4 12.6Z" fill="#f3b02c"/><circle cx="9.6" cy="2.4" r="2.3" fill="${on ? '#58bf5c' : '#aeb3bb'}"/></svg>${host}</div>
                <div class="w-[81px] shrink-0 pl-[9px]">${conn}</div>
                <div class="w-[69.5px] shrink-0 pl-[9px] text-[6.75px]">Server Version</div>
                <div class="w-[69px] shrink-0 pl-[9px]">${group}</div>
                <div class="flex w-[116px] shrink-0 items-center justify-between pl-[9px] pr-[12px]">3.14.0.1-251029.102.x8...<svg width="8" height="8" viewBox="0 0 11 11" fill="none" stroke="#868e99"><circle cx="5.5" cy="5.5" r="4.7"/><path d="M5.5 4.8V8M5.5 3V3.9"/></svg></div>
                <div class="pl-[9px]">Normal</div>
            </div>`).join('');

        // Donut charts: segments as [end angle, color], clockwise from the top
        function drawDonut(id, segments) {
            let start = 0;
            document.getElementById(id).innerHTML = segments.map(([end, color]) => {
                const arc = `<circle r="45" fill="none" stroke="${color}" stroke-width="9.2" pathLength="360" stroke-dasharray="${end - start - 1} 360" transform="rotate(${start - 89.5})"/>`;
                start = end;
                return arc;
            }).join('');
        }
        drawDonut('donut1', [
            [6, '#4498db'], [12, '#b9e4f8'], [30, '#f7c652'], [35.5, '#fdebb9'], [41, '#e0772e'], [58, '#dfe1e4'], [64.5, '#ec8a60'],
            [87, '#8f63b0'], [93, '#dd82c8'], [99, '#4498db'], [105, '#b9e4f8'], [110.5, '#f7c652'], [116, '#fdebb9'], [122, '#e0772e'],
            [128, '#dfe1e4'], [134, '#ec8a60'], [157, '#8f63b0'], [191.5, '#dd82c8'], [203, '#4498db'], [208.5, '#b9e4f8'], [214, '#f7c652'],
            [233, '#fdebb9'], [268, '#b9e4f8'], [284.5, '#e0772e'], [290, '#dfe1e4'], [360, '#ec8a60']
        ]);
        drawDonut('donut2', [[343, '#50ae7f'], [348.5, '#cf4047'], [360, '#f7c652']]);
    </script>
</body>
</html>
